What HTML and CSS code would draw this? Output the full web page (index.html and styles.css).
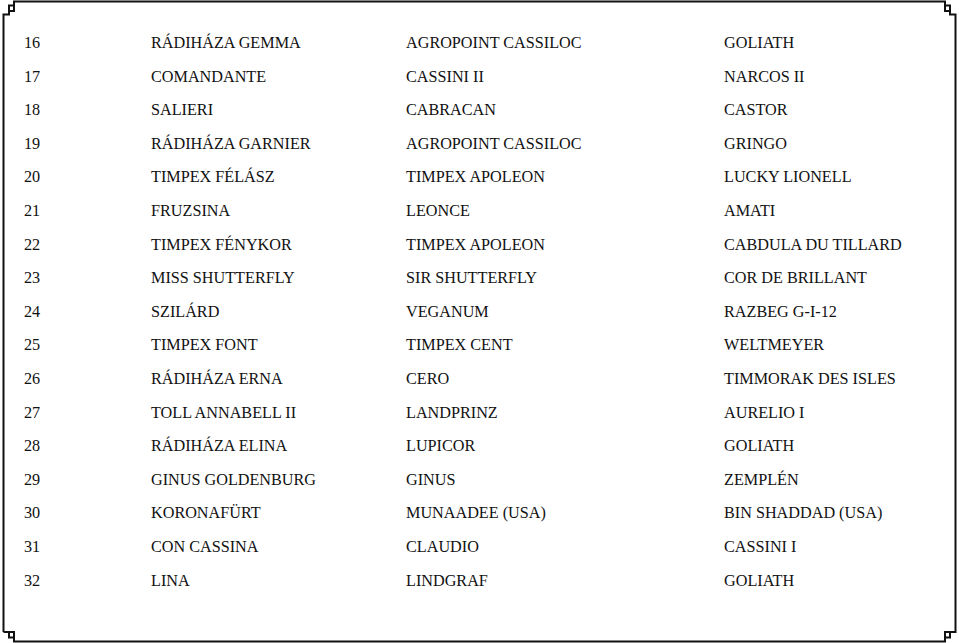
FILE: index.html
```html
<!DOCTYPE html>
<html lang="hu">
<head>
<meta charset="utf-8">
<title>Lista</title>
<link rel="stylesheet" href="styles.css">
</head>
<body>
<div class="page">
  <svg class="frame" width="959" height="643" viewBox="0 0 959 643" aria-hidden="true">
    <path d="M3.5,632 V14.5 H9 V5.5 H14 V11 H9 M14,5.5 V1.5 H945 V5.5 H950 V11 H945 V5.5 M950,11 V14.5 H955.5 V632 H950 V637.5 H945 V632 H950 M945,637.5 V641.5 H14 V637.5 H9 V632 H14 V637.5 M9,632 H3.5" fill="none" stroke="#111" stroke-width="2"/>
  </svg>
  <div class="list">
    <div class="row"><span>16</span><span>RÁDIHÁZA GEMMA</span><span>AGROPOINT CASSILOC</span><span>GOLIATH</span></div>
    <div class="row"><span>17</span><span>COMANDANTE</span><span>CASSINI II</span><span>NARCOS II</span></div>
    <div class="row"><span>18</span><span>SALIERI</span><span>CABRACAN</span><span>CASTOR</span></div>
    <div class="row"><span>19</span><span>RÁDIHÁZA GARNIER</span><span>AGROPOINT CASSILOC</span><span>GRINGO</span></div>
    <div class="row"><span>20</span><span>TIMPEX FÉLÁSZ</span><span>TIMPEX APOLEON</span><span>LUCKY LIONELL</span></div>
    <div class="row"><span>21</span><span>FRUZSINA</span><span>LEONCE</span><span>AMATI</span></div>
    <div class="row"><span>22</span><span>TIMPEX FÉNYKOR</span><span>TIMPEX APOLEON</span><span>CABDULA DU TILLARD</span></div>
    <div class="row"><span>23</span><span>MISS SHUTTERFLY</span><span>SIR SHUTTERFLY</span><span>COR DE BRILLANT</span></div>
    <div class="row"><span>24</span><span>SZILÁRD</span><span>VEGANUM</span><span>RAZBEG G-I-12</span></div>
    <div class="row"><span>25</span><span>TIMPEX FONT</span><span>TIMPEX CENT</span><span>WELTMEYER</span></div>
    <div class="row"><span>26</span><span>RÁDIHÁZA ERNA</span><span>CERO</span><span>TIMMORAK DES ISLES</span></div>
    <div class="row"><span>27</span><span>TOLL ANNABELL II</span><span>LANDPRINZ</span><span>AURELIO I</span></div>
    <div class="row"><span>28</span><span>RÁDIHÁZA ELINA</span><span>LUPICOR</span><span>GOLIATH</span></div>
    <div class="row"><span>29</span><span>GINUS GOLDENBURG</span><span>GINUS</span><span>ZEMPLÉN</span></div>
    <div class="row"><span>30</span><span>KORONAFÜRT</span><span>MUNAADEE (USA)</span><span>BIN SHADDAD (USA)</span></div>
    <div class="row"><span>31</span><span>CON CASSINA</span><span>CLAUDIO</span><span>CASSINI I</span></div>
    <div class="row"><span>32</span><span>LINA</span><span>LINDGRAF</span><span>GOLIATH</span></div>
  </div>
</div>
</body>
</html>
```
FILE: styles.css
```css
html, body {
  margin: 0;
  padding: 0;
  background: #fff;
}
.page {
  position: relative;
  width: 959px;
  height: 643px;
  overflow: hidden;
  font-family: "Liberation Serif", "Times New Roman", serif;
  font-size: 16.2px;
  color: #111;
}
.frame {
  position: absolute;
  left: 0;
  top: 0;
  pointer-events: none;
}
.list {
  padding: 27px 0 0 24px;
}
.row {
  display: grid;
  grid-template-columns: 127px 255px 318px 1fr;
  height: 33.6px;
  line-height: 33.6px;
  white-space: nowrap;
}
```
